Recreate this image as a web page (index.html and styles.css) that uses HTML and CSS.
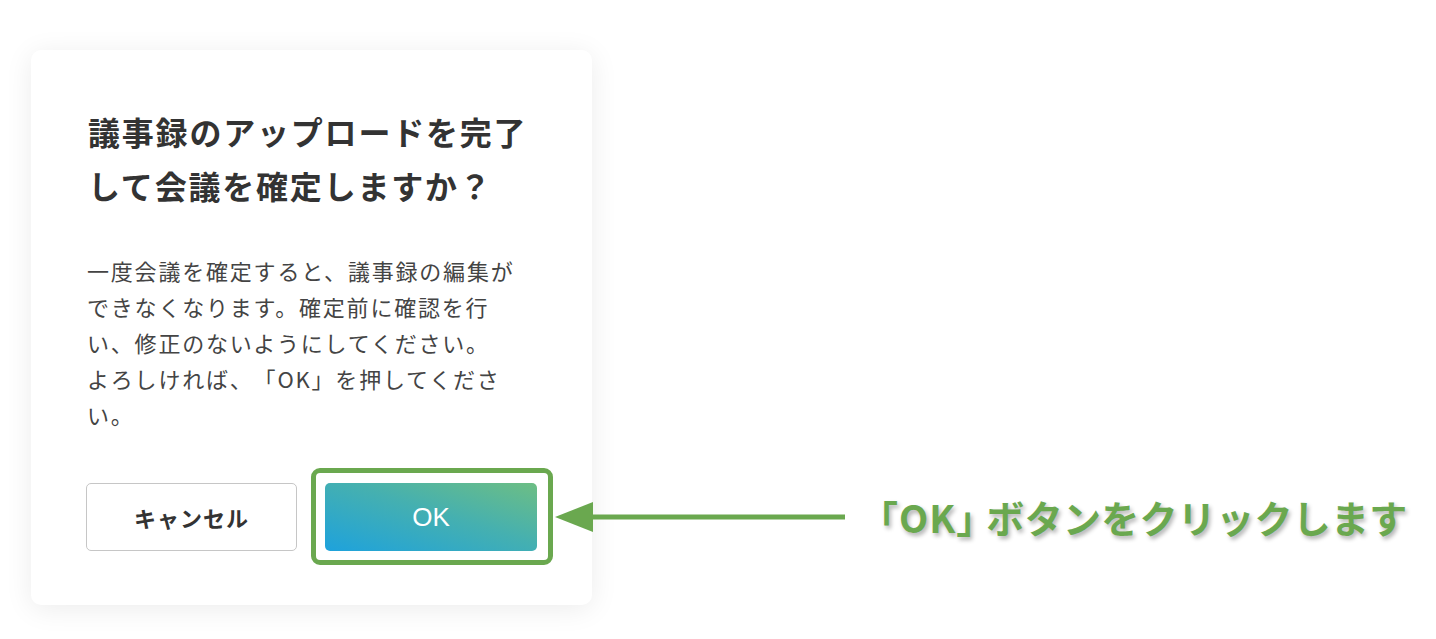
FILE: index.html
```html
<!DOCTYPE html>
<html lang="ja">
<head>
<meta charset="utf-8">
<title>会議の確定</title>
<link rel="stylesheet" href="styles.css">
</head>
<body>
<div class="page">
  <div class="dialog">
    <h2 class="dialog-title">議事録のアップロードを完了<br>して会議を確定しますか？</h2>
    <p class="dialog-text">一度会議を確定すると、議事録の編集が<br>できなくなります。確定前に確認を行<br>い、修正のないようにしてください。<br>よろしければ、「OK」を押してくださ<br>い。</p>
    <div class="dialog-actions">
      <button class="btn btn-cancel" type="button">キャンセル</button>
      <div class="ok-wrap">
        <button class="btn btn-ok" type="button">OK</button>
        <span class="highlight"></span>
        <div class="callout">
          <svg class="callout-arrow" width="290" height="30" viewBox="0 0 290 30" aria-hidden="true">
            <polygon points="0,15 38,0 38,30" fill="#6aa84f"/>
            <rect x="37" y="12.5" width="253" height="5" fill="#6aa84f"/>
          </svg>
          <span class="callout-text"><span class="callout-quote">「OK」</span>ボタンをクリックします</span>
        </div>
      </div>
    </div>
  </div>
</div>
</body>
</html>
```

FILE: styles.css
```css
html, body {
  margin: 0;
  background: #ffffff;
}

body {
  font-family: "Noto Sans CJK JP", "Noto Sans", sans-serif;
  height: 639px;
  overflow: hidden;
  text-spacing-trim: space-all;
}

.page {
  padding: 50px 0 0 31px;
}

.dialog {
  width: 561px;
  box-sizing: border-box;
  padding: 54px 55px;
  background: #ffffff;
  border-radius: 10px;
  box-shadow: 0 4px 28px rgba(0, 0, 0, 0.08);
}

.dialog-title {
  margin: 0;
  padding-left: 2px;
  font-size: 32px;
  font-weight: 700;
  line-height: 54px;
  letter-spacing: 1.8px;
  color: #333333;
  white-space: nowrap;
}

.dialog-text {
  margin: 40px 0 0;
  padding-left: 1px;
  font-size: 22px;
  line-height: 36px;
  letter-spacing: 1.8px;
  color: #444444;
  white-space: nowrap;
}

.dialog-actions {
  display: flex;
  gap: 28px;
  margin-top: 51px;
}

.btn {
  display: block;
  width: 211px;
  height: 68px;
  margin: 0;
  padding: 0;
  border-radius: 5px;
  font-family: inherit;
  font-size: 22px;
  cursor: pointer;
}

.btn-cancel {
  background: #ffffff;
  border: 1px solid #c6c6c6;
  color: #333333;
  font-weight: 700;
  letter-spacing: 1px;
}

.ok-wrap {
  position: relative;
}

.btn-ok {
  width: 212px;
  border: none;
  color: #ffffff;
  font-family: "Liberation Sans", "Noto Sans CJK JP", sans-serif;
  font-size: 26px;
  font-weight: 400;
  background: linear-gradient(to top right, #1ea2dc 0%, #45b0b0 55%, #6dbe84 100%);
}

.highlight {
  position: absolute;
  top: -15px;
  left: -14px;
  right: -16px;
  bottom: -14px;
  border: 5px solid #6aa84f;
  border-radius: 9px;
  pointer-events: none;
}

.callout {
  position: absolute;
  left: calc(100% + 18px);
  top: 50%;
  transform: translateY(-50%);
  display: flex;
  align-items: center;
  gap: 34px;
  white-space: nowrap;
}

.callout-arrow {
  display: block;
  flex: none;
}

.callout-text {
  font-size: 38px;
  font-weight: 700;
  line-height: 1;
  letter-spacing: 0.3px;
  color: #6aa84f;
  text-shadow: 2px 3px 4px rgba(0, 0, 0, 0.3);
}

.callout-quote {
  font-feature-settings: "halt";
  letter-spacing: 1px;
  margin-right: 10px;
}
```
